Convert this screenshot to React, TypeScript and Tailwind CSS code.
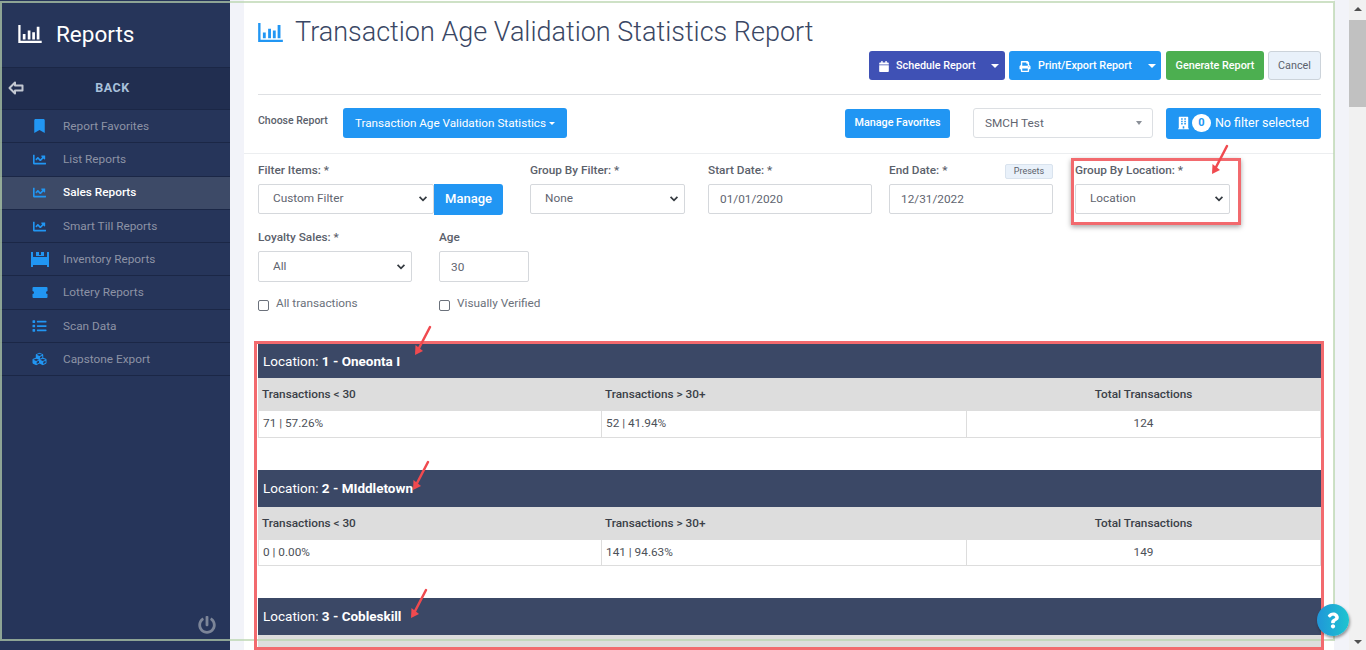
import { ReactNode } from 'react';
import {
  FaBookmark,
  FaBuilding,
  FaCalendar,
  FaChartLine,
  FaCubes,
  FaList,
  FaPowerOff,
  FaPrint,
  FaQuestion,
} from 'react-icons/fa';

function BarsIcon({ className }: { className: string }) {
  return (
    <svg viewBox="0 0 26 20" className={className} fill="currentColor">
      <path d="M0 0h2.500v17.500H26V20H0z" />
      <path d="M5 10h3v6H5zM10.500 6h3v10h-3zM15.500 8h3v8h-3zM20.500 2h3v14h-3z" />
    </svg>
  );
}

function PalletIcon({ className }: { className: string }) {
  return (
    <svg viewBox="0 0 18 15" className={className} fill="currentColor">
      <path d="M0 0h2v5h14V0h2v15h-2v-2H2v2H0z" />
      <path d="M5 0h3v3h2V0h3v4H5zM3.500 7h3v3h-3zM7.500 7h3v3h-3zM11.500 7h3v3h-3z" />
    </svg>
  );
}

function TicketIcon({ className }: { className: string }) {
  return (
    <svg viewBox="0 0 16 11" className={className} fill="currentColor">
      <path d="M1.500 0h13a1 1 0 0 1 1 1v3a1.500 1.500 0 0 0 0 3v3a1 1 0 0 1-1 1h-13a1 1 0 0 1-1-1V7a1.500 1.500 0 0 0 0-3V1a1 1 0 0 1 1-1z" />
    </svg>
  );
}

function BackArrow() {
  return (
    <svg viewBox="0 0 16 14" className="h-[14px] w-[16px]" fill="none" stroke="#c3c8d2" strokeWidth="2" strokeLinejoin="round">
      <path d="M7 1.500 1.500 7 7 12.500V9.500h7.500v-5H7z" />
    </svg>
  );
}

function Chevron() {
  return (
    <svg viewBox="0 0 10 7" className="pointer-events-none absolute right-[6px] top-1/2 h-[6px] w-[10px] -translate-y-1/2" fill="none" stroke="#343a40" strokeWidth="2">
      <path d="M1 1l4 4 4-4" />
    </svg>
  );
}

function Caret({ className = '' }: { className?: string }) {
  return <span className={`inline-block h-0 w-0 border-x-[4px] border-t-[4px] border-x-transparent border-t-white ${className}`} />;
}

function SideItem({ icon, label, active }: { icon: ReactNode; label: string; active?: boolean }) {
  return (
    <div className={`flex h-[33.3px] items-center border-b border-[#1b2746] ${active ? 'bg-[#3d4a67]' : ''}`}>
      <span className="flex w-[63px] shrink-0 justify-center pl-[16px] text-[#2196f3]">{icon}</span>
      <span className={`pt-[1px] text-[11.8px] ${active ? 'font-medium text-white' : 'text-[#8d93a5]'}`}>{label}</span>
    </div>
  );
}

function Field({ label, width, children, extra }: { label: string; width: string; children: ReactNode; extra?: ReactNode }) {
  return (
    <div className={`flex flex-col ${width}`}>
      <div className="flex h-[26px] items-start justify-between pt-[4px] text-[11.8px] font-medium text-[#5b616b]">
        <span>{label}</span>
        {extra}
      </div>
      {children}
    </div>
  );
}

function SelectBox({ value, className }: { value: string; className: string }) {
  return (
    <div className={`relative h-[30px] ${className}`}>
      <select
        defaultValue={value}
        className="h-full w-full appearance-none rounded-[2px] border border-[#d5d8dc] bg-white pl-[14px] text-[11.8px] text-[#5f6570] outline-none"
      >
        <option>{value}</option>
      </select>
      <Chevron />
    </div>
  );
}

function TextBox({ value, className }: { value: string; className: string }) {
  return (
    <input
      readOnly
      value={value}
      className={`h-[30px] rounded-[2px] border border-[#d5d8dc] bg-white pl-[11px] text-[11.8px] text-[#5f6570] outline-none ${className}`}
    />
  );
}

function LocationTable({ number, name, under, over, total, headH, rowH }: { number: string; name: string; under: string; over: string; total: string; headH: string; rowH: string }) {
  return (
    <div className="mb-[32px] w-full">
      <div className={`flex items-center bg-[#3b4866] pl-[5px] text-[13.5px] text-white ${headH}`}>
        Location:&nbsp;<b>{number} - {name}</b>
      </div>
      <div className="grid h-[33px] grid-cols-[343px_365px_1fr] items-center bg-[#dddddd] text-[11.8px] font-medium text-[#3a3f47]">
        <span className="pl-[4px]">Transactions &lt; 30</span>
        <span className="pl-[4px]">Transactions &gt; 30+</span>
        <span className="text-center">Total Transactions</span>
      </div>
      <div className={`grid grid-cols-[343px_365px_1fr] items-center border-x border-b border-[#dddddd] text-[11.8px] text-[#4d5158] ${rowH}`}>
        <span className="flex h-full items-center border-r border-[#dddddd] pl-[4px]">{under}</span>
        <span className="flex h-full items-center border-r border-[#dddddd] pl-[4px]">{over}</span>
        <span className="text-center">{total}</span>
      </div>
    </div>
  );
}

function RedArrow({ className }: { className: string }) {
  return (
    <svg viewBox="0 0 20 32" className={`pointer-events-none absolute h-[32px] w-[20px] ${className}`} fill="none" stroke="#f04a4f" strokeWidth="2.500" strokeLinecap="round">
      <path d="M17 2 4 27" />
      <path d="M2 30 2.500 20 10 26z" fill="#f04a4f" stroke="none" />
    </svg>
  );
}

export default function App() {
  return (
    <div className="relative flex h-[650px] w-[1366px] overflow-hidden bg-[#f2f3f9] font-['Roboto',sans-serif]">
      {/* sidebar */}
      <aside className="flex w-[230px] shrink-0 flex-col bg-[#26355a]">
        <div className="flex h-[68px] items-center border-b border-[#1b2746] pl-[18px] text-white">
          <BarsIcon className="h-[18px] w-[24px]" />
          <span className="ml-[14px] pt-[2px] text-[22.5px] font-normal">Reports</span>
        </div>
        <div className="relative flex h-[42px] items-center justify-center border-b border-[#1b2746] bg-[#212e50]">
          <span className="absolute left-[8px] top-[13px]"><BackArrow /></span>
          <span className="-ml-[5px] text-[12.500px] font-bold tracking-[0.5px] text-[#a9c1dc]">BACK</span>
        </div>
        <SideItem icon={<FaBookmark className="h-[14px] w-[11px]" />} label="Report Favorites" />
        <SideItem icon={<FaChartLine className="h-[13px] w-[15px]" />} label="List Reports" />
        <SideItem active icon={<FaChartLine className="h-[13px] w-[15px]" />} label="Sales Reports" />
        <SideItem icon={<FaChartLine className="h-[13px] w-[15px]" />} label="Smart Till Reports" />
        <SideItem icon={<PalletIcon className="h-[15px] w-[18px]" />} label="Inventory Reports" />
        <SideItem icon={<TicketIcon className="h-[11px] w-[16px]" />} label="Lottery Reports" />
        <SideItem icon={<FaList className="h-[14px] w-[15px]" />} label="Scan Data" />
        <SideItem icon={<FaCubes className="h-[14px] w-[15px]" />} label="Capstone Export" />
        <div className="mt-auto flex justify-end pb-[10px] pr-[8px]">
          <span className="flex h-[30px] w-[30px] items-center justify-center">
            <FaPowerOff className="h-[18px] w-[18px] text-[#7c8598]" />
          </span>
        </div>
      </aside>

      {/* report panel */}
      <main className="ml-[14px] flex h-[650px] w-[1090px] shrink-0 flex-col overflow-hidden bg-white pt-[3px]">
        <div className="pl-[14px] pr-[13px]">
          <div className="flex h-[48px] items-center pt-[10px] text-[#3a4764]">
            <BarsIcon className="h-[19px] w-[25px] text-[#2196f3]" />
            <h1 className="ml-[12px] text-[27px] font-light">Transaction Age Validation Statistics Report</h1>
          </div>
          <div className="flex h-[29px] justify-end gap-[4px]">
            <div className="flex h-[29px] w-[136px] items-center rounded-[3px] bg-[#3f51b5] pl-[10px] pt-[1px] text-[10.8px] font-medium text-white">
              <FaCalendar className="h-[11px] w-[10px]" />
              <span className="ml-[7px]">Schedule Report</span>
              <Caret className="ml-[15px]" />
            </div>
            <div className="flex h-[29px] w-[152px] items-center rounded-[3px] bg-[#2196f3] pl-[10px] pt-[1px] text-[10.8px] font-medium text-white">
              <FaPrint className="h-[11px] w-[12px]" />
              <span className="ml-[7px]">Print/Export Report</span>
              <Caret className="ml-[16px]" />
            </div>
            <div className="ml-[1px] flex h-[29px] w-[98px] items-center justify-center rounded-[3px] bg-[#4caf50] pt-[1px] text-[10.8px] font-medium text-white">Generate Report</div>
            <div className="flex h-[29px] w-[53px] items-center justify-center rounded-[3px] border border-[#ccd3da] bg-[#e9f1fa] pt-[1px] text-[10.8px] text-[#5b616b]">Cancel</div>
          </div>
          <div className="mt-[14px] border-t border-[#dee0e3]" />
          <div className="mt-[13px] flex h-[30px] items-center">
            <span className="-mt-[5px] w-[85px] text-[10.500px] font-medium text-[#5b616b]">Choose Report</span>
            <div className="flex h-[30px] w-[224px] items-center justify-center rounded-[3px] bg-[#2196f3] pt-[1px] text-[11.7px] text-white">
              Transaction Age Validation Statistics
              <span className="ml-[3px] inline-block h-0 w-0 border-x-[3px] border-t-[3px] border-x-transparent border-t-white" />
            </div>
            <div className="ml-[278px] flex h-[29px] w-[105px] items-center justify-center rounded-[3px] bg-[#2196f3] text-[10.8px] font-medium text-white">Manage Favorites</div>
            <div className="relative ml-[23px] flex h-[30px] w-[180px] items-center rounded-[3px] border border-[#dcdfe3] pl-[11px] pt-[1px] text-[11.8px] text-[#5f6570]">
              SMCH Test
              <span className="absolute right-[10px] top-[12px] h-0 w-0 border-x-[3px] border-t-[4px] border-x-transparent border-t-[#8a8f97]" />
            </div>
            <div className="ml-[13px] flex h-[31px] w-[155px] items-center justify-center rounded-[3px] bg-[#2196f3] text-[12.500px] text-white">
              <FaBuilding className="h-[14px] w-[11px]" />
              <span className="ml-[3px] flex h-[18px] w-[19px] items-center justify-center rounded-full bg-white text-[11px] font-bold text-[#2196f3]">0</span>
              <span className="ml-[4px]">No filter selected</span>
            </div>
          </div>
        </div>

        <div className="mt-[15px] border-t border-[#eceef0]" />

        {/* filters */}
        <div className="pl-[14px] pr-[13px] pt-[4px]">
          <div className="flex">
            <Field label="Filter Items: *" width="w-[245px]">
              <div className="flex">
                <SelectBox value="Custom Filter" className="w-[176px]" />
                <div className="flex h-[31px] w-[69px] items-center justify-center rounded-r-[3px] bg-[#2196f3] pb-[1px] text-[13px] font-medium text-white">Manage</div>
              </div>
            </Field>
            <Field label="Group By Filter: *" width="ml-[27px] w-[155px]">
              <SelectBox value="None" className="w-[155px]" />
            </Field>
            <Field label="Start Date: *" width="ml-[23px] w-[164px]">
              <TextBox value="01/01/2020" className="w-[164px]" />
            </Field>
            <Field
              label="End Date: *"
              width="ml-[17px] w-[164px]"
              extra={<span className="mt-[2px] flex h-[15px] w-[48px] items-center justify-center rounded-[2px] border border-[#d9e3ee] bg-[#e9f1fa] text-[9px] font-normal text-[#5b616b]">Presets</span>}
            >
              <TextBox value="12/31/2022" className="w-[164px]" />
            </Field>
            <Field label="Group By Location: *" width="ml-[22px] w-[155px]">
              <SelectBox value="Location" className="w-[155px]" />
            </Field>
          </div>
          <div className="mt-[10px] flex">
            <Field label="Loyalty Sales: *" width="w-[154px]">
              <SelectBox value="All" className="h-[31px] w-[154px]" />
            </Field>
            <Field label="Age" width="ml-[27px] w-[90px]">
              <TextBox value="30" className="h-[31px] w-[90px]" />
            </Field>
          </div>
          <div className="mt-[14px] flex h-[16px] items-center text-[11.8px] text-[#6b717b]">
            <label className="flex w-[181px] items-center">
              <input type="checkbox" className="mt-[3px] h-[11px] w-[11px] appearance-none rounded-[2px] border border-[#6b717b] bg-white" />
              <span className="ml-[7px]">All transactions</span>
            </label>
            <label className="flex items-center">
              <input type="checkbox" className="mt-[3px] h-[11px] w-[11px] appearance-none rounded-[2px] border border-[#6b717b] bg-white" />
              <span className="ml-[7px]">Visually Verified</span>
            </label>
          </div>

          {/* tables */}
          <div className="mt-[32px]">
            <LocationTable number="1" name="Oneonta I" under="71 | 57.26%" over="52 | 41.94%" total="124" headH="h-[34px]" rowH="h-[27px]" />
            <LocationTable number="2" name="MIddletown" under="0 | 0.00%" over="141 | 94.63%" total="149" headH="h-[37px]" rowH="h-[26px]" />
            <LocationTable number="3" name="Cobleskill" under="" over="" total="" headH="h-[37px]" rowH="h-[27px]" />
          </div>
        </div>
      </main>

      {/* scrollbar */}
      <div className="ml-[15px] flex h-[650px] w-[17px] shrink-0 flex-col items-center bg-[#f1f1f1]">
        <span className="mt-[7px] h-0 w-0 border-x-[4px] border-b-[4px] border-x-transparent border-b-[#505050]" />
        <span className="mt-[9px] h-[87px] w-full bg-[#c1c1c1]" />
        <span className="mb-[6px] mt-auto h-0 w-0 border-x-[4px] border-t-[4px] border-x-transparent border-t-[#505050]" />
      </div>

      {/* screenshot annotations */}
      <div className="pointer-events-none absolute left-0 top-[1px] h-[640px] w-[1335px] border-2 border-[#b9d4ae]/70" />
      <div className="pointer-events-none absolute left-[1071px] top-[158px] h-[67px] w-[170px] border-[3px] border-[#f26a6e] shadow-[0_2px_5px_rgba(0,0,0,0.35)]" />
      <div className="pointer-events-none absolute left-[254px] top-[341px] h-[309px] w-[1070px] border-[3px] border-[#f26a6e]" />
      <RedArrow className="left-[1210px] top-[144px]" />
      <RedArrow className="left-[413px] top-[325px]" />
      <RedArrow className="left-[411px] top-[460px]" />
      <RedArrow className="left-[409px] top-[588px]" />

      {/* help button */}
      <div className="absolute left-[1317px] top-[604px] flex h-[32px] w-[32px] items-center justify-center rounded-full bg-gradient-to-r from-[#2196d8] to-[#1fc4d0] shadow-[1px_2px_3px_rgba(0,0,0,0.4)]">
        <FaQuestion className="h-[17px] w-[12px] text-white" />
      </div>
    </div>
  );
}
